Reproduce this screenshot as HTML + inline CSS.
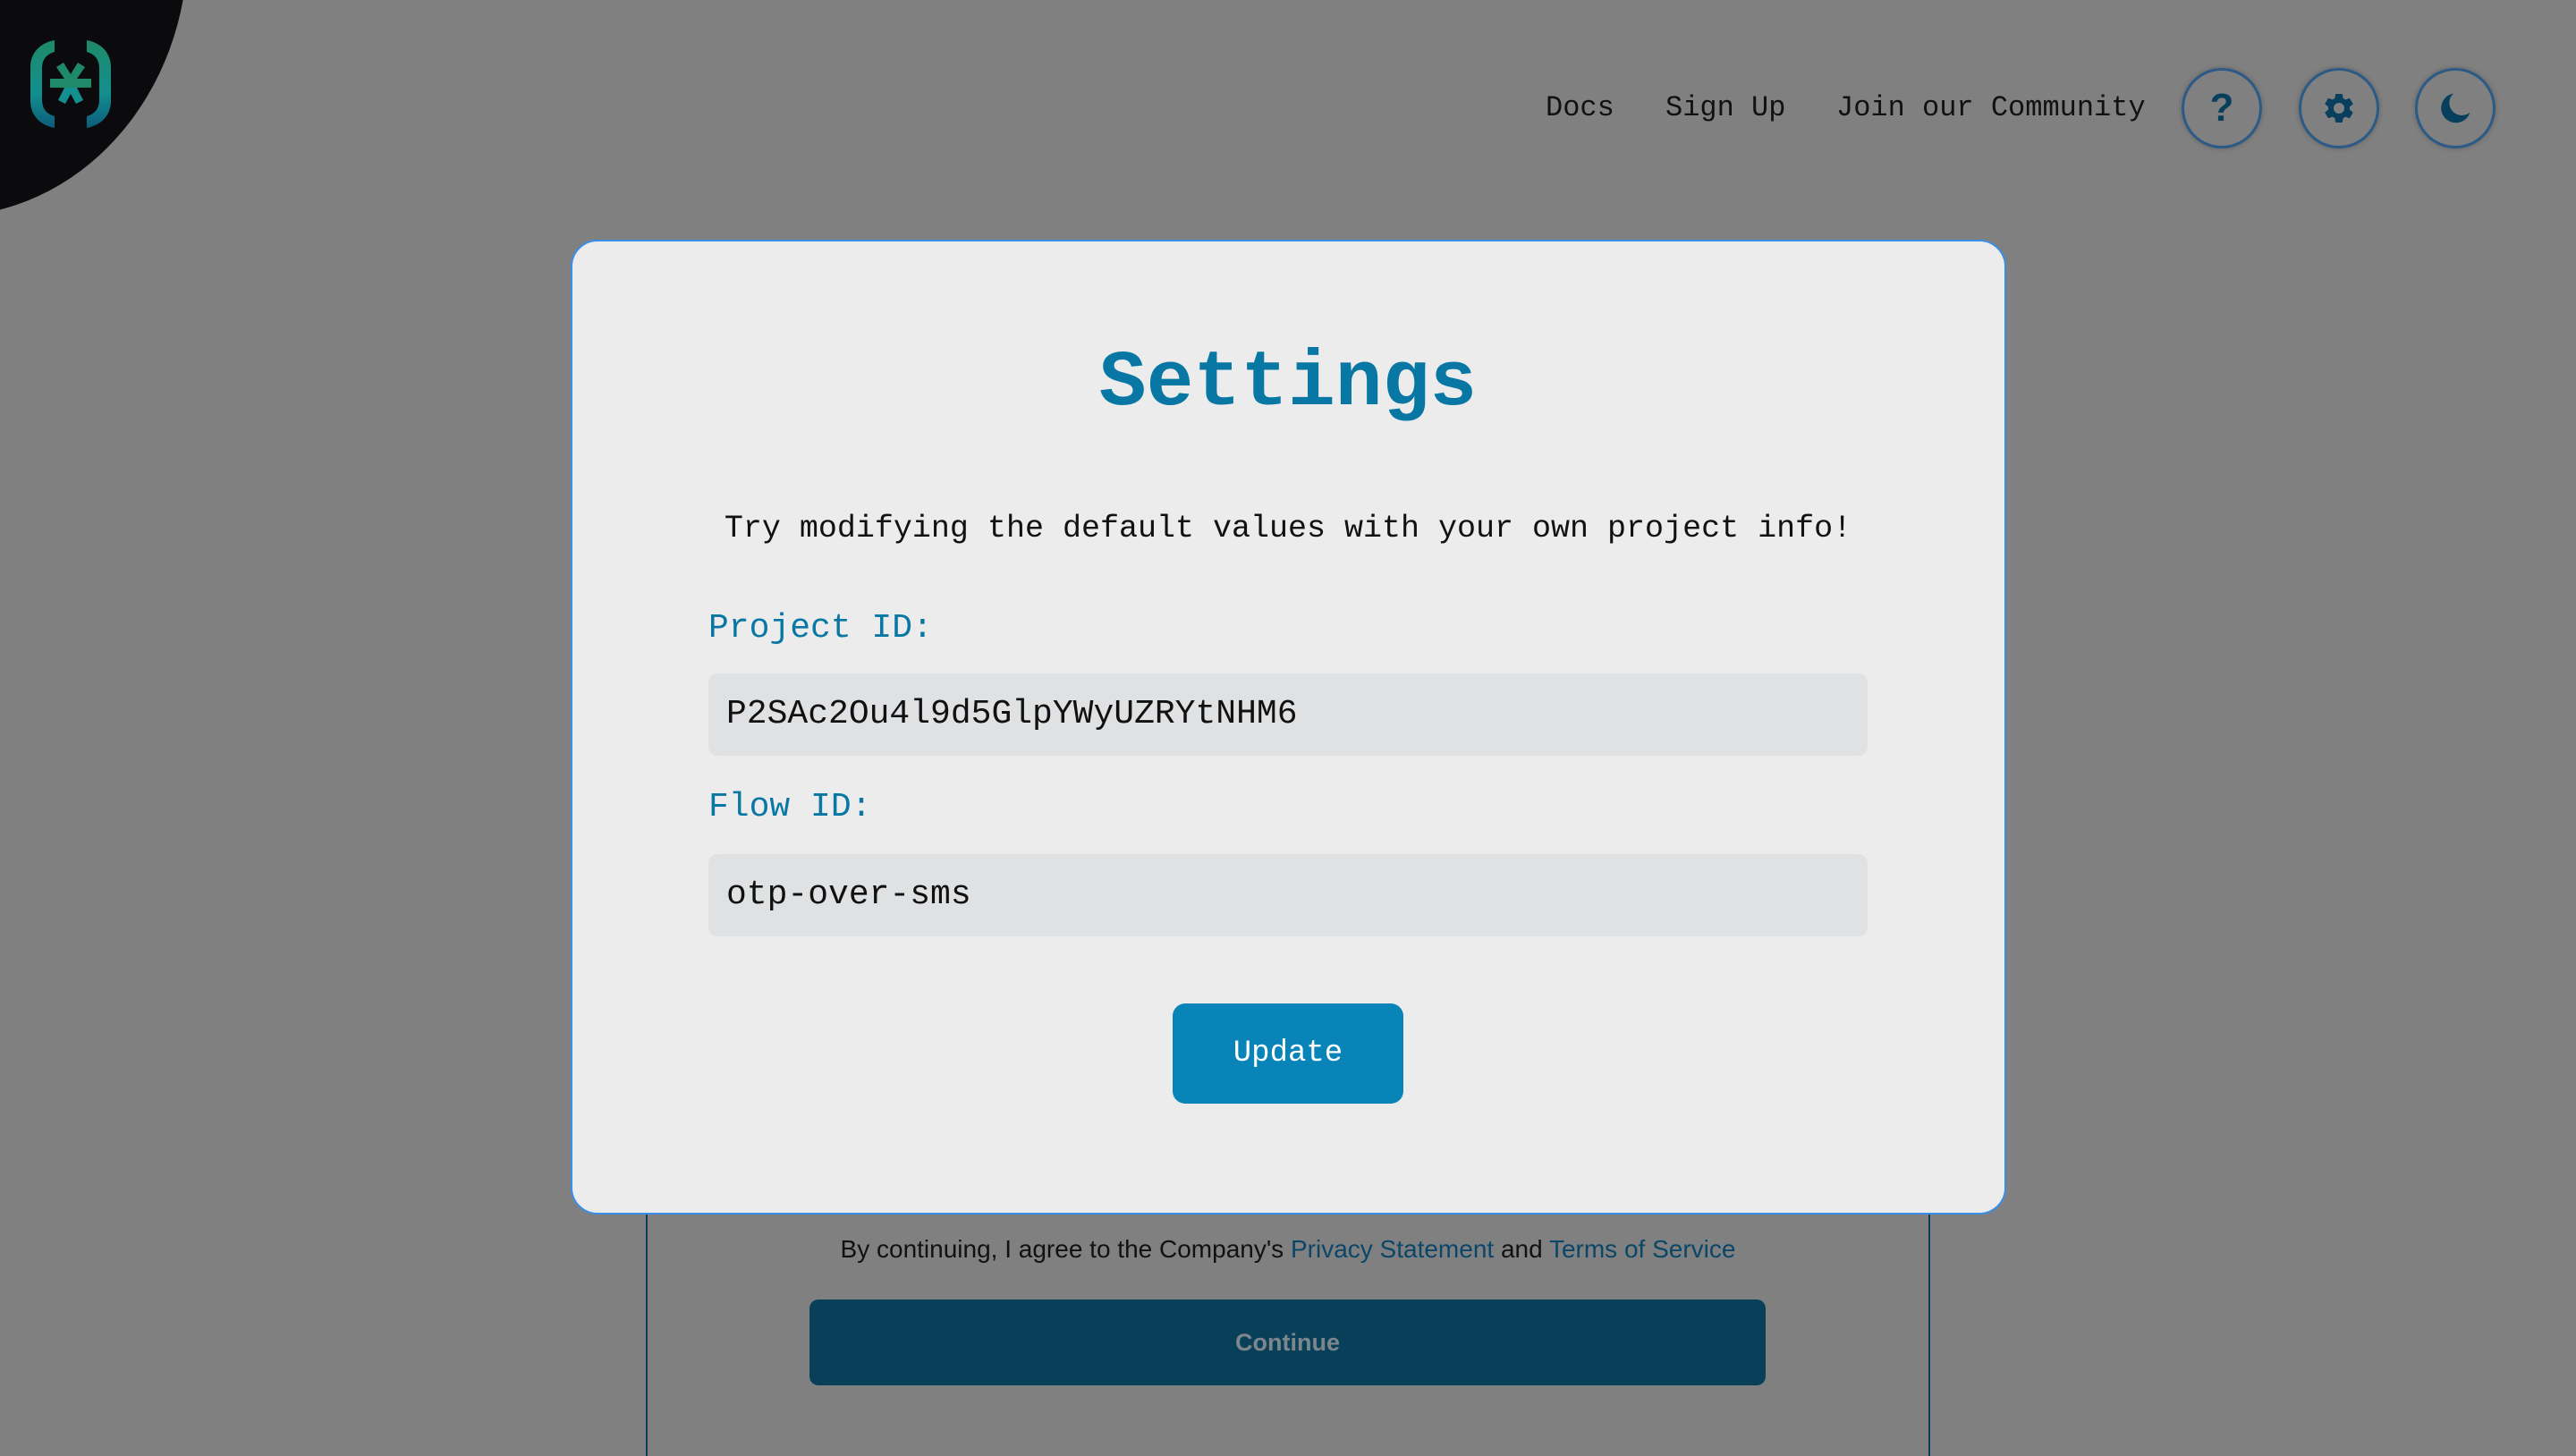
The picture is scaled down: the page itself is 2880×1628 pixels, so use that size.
<!DOCTYPE html>
<html><head><meta charset="utf-8"><style>
*{margin:0;padding:0;box-sizing:border-box}
html{height:1628px;overflow:hidden}
body{width:2880px;height:1628px;background:#808080;position:relative;overflow:hidden;font-family:"Liberation Mono",monospace}
.blob{position:absolute;left:-60px;top:-60px;width:270px;height:302px;background:#0b0b0d;border-bottom-right-radius:100% 100%}
.nav{position:absolute;top:102px;font-size:32px;color:#111;white-space:nowrap}
.cb{position:absolute;top:76px;width:90px;height:90px;border-radius:50%;border:3px solid #2c5a86;box-shadow:0 0 6px rgba(0,0,0,.25);display:flex;align-items:center;justify-content:center}
.card{position:absolute;left:722px;top:1300px;width:1436px;height:328px;border:2px solid #0a3f5a;border-bottom:none;border-radius:24px 24px 0 0}
.terms{position:absolute;left:0;width:2880px;top:1381px;text-align:center;font-family:"Liberation Sans",sans-serif;font-size:28px;color:#111}
.terms span{color:#0b4668}
.cont{position:absolute;left:905px;top:1453px;width:1069px;height:96px;background:#094059;border-radius:10px;color:#7d868c;font-family:"Liberation Sans",sans-serif;font-size:27px;font-weight:bold;display:flex;align-items:center;justify-content:center}
.modal{position:absolute;left:638px;top:268px;width:1605px;height:1090px;background:#ececec;border:2px solid #3b8ee8;border-radius:30px}
.title{position:absolute;left:0;width:100%;top:380px;text-align:center;font-size:88px;font-weight:bold;color:#0877a4}
.sub{position:absolute;left:0;width:100%;top:571px;text-align:center;font-size:35px;color:#111}
.lbl{position:absolute;left:792px;font-size:38px;color:#0877a4}
.inp{position:absolute;left:792px;width:1296px;height:92px;background:#e0e1e3;border-radius:10px;font-size:38px;color:#111;padding-left:20px;line-height:92px}
.upd{position:absolute;left:1311px;top:1122px;width:258px;height:112px;background:#0984b8;border-radius:14px;color:#fff;font-size:34px;display:flex;align-items:center;justify-content:center}
</style></head><body>
<div class="blob"></div>
<svg style="position:absolute;left:34px;top:45px" width="90" height="98" viewBox="0 0 90 98">
<defs><linearGradient id="g" x1="0" y1="0" x2="0" y2="1"><stop offset="0" stop-color="#1e8a68"/><stop offset=".6" stop-color="#138f8f"/><stop offset="1" stop-color="#0c5c7a"/></linearGradient></defs>
<path d="M27 0 C10 3 0 15 0 30 V68 C0 83 10 95 27 98 V85 C17 82 13 76 13 66 V32 C13 22 17 16 27 13Z" fill="url(#g)"/>
<path d="M63 0 C80 3 90 15 90 30 V68 C90 83 80 95 63 98 V85 C73 82 77 76 77 66 V32 C77 22 73 16 63 13Z" fill="url(#g)"/>
<rect x="22" y="43" width="46" height="10" fill="#1e8a68"/>
<path d="M29 30 L37 25 L45 38 L53 25 L61 30 L52 43 L38 43Z" fill="#1e8a68"/>
<path d="M38 53 L52 53 L59 67 L51 71 L45 60 L39 71 L31 67Z" fill="#148f8f"/>
</svg>
<div class="nav" style="left:1728px">Docs</div>
<div class="nav" style="left:1862px">Sign Up</div>
<div class="nav" style="left:2053px">Join our Community</div>
<div class="cb" style="left:2439px"><span style="font-family:'Liberation Sans',sans-serif;font-weight:bold;font-size:44px;color:#083f5c">?</span></div>
<div class="cb" style="left:2570px"><svg width="40" height="40" viewBox="0 0 24 24"><path fill="#083f5c" d="M19.14 12.94c.04-.3.06-.61.06-.94s-.02-.64-.07-.94l2.030-1.58a.5.5 0 0 0 .12-.61l-1.92-3.32a.5.5 0 0 0-.59-.22l-2.39.96a7 7 0 0 0-1.62-.94L14.4 2.81a.5.5 0 0 0-.48-.41h-3.840a.5.5 0 0 0-.48.41l-.36 2.54c-.59.24-1.13.57-1.62.94l-2.39-.96a.5.5 0 0 0-.59.22L2.72 8.87a.5.5 0 0 0 .12.61l2.03 1.58c-.05.3-.07.63-.07.94s.02.64.07.94l-2.03 1.58a.5.5 0 0 0-.12.61l1.92 3.32c.12.22.37.29.59.22l2.39-.96c.5.38 1.03.7 1.62.94l.36 2.54c.05.24.24.41.48.41h3.84c.24 0 .44-.17.47-.41l.36-2.54c.59-.24 1.130-.56 1.62-.94l2.39.96c.22.08.47 0 .59-.22l1.92-3.32a.5.5 0 0 0-.12-.61zM12 15.6A3.6 3.6 0 1 1 12 8.4a3.6 3.6 0 0 1 0 7.2z"/></svg></div>
<div class="cb" style="left:2700px"><svg width="44" height="44" viewBox="0 0 24 24"><path fill="#083f5c" d="M11 3a9 9 0 1 0 10 11.5A7 7 0 0 1 11 3z"/></svg></div>
<div class="card"></div>
<div class="terms">By continuing, I agree to the Company's <span>Privacy Statement</span> and <span>Terms of Service</span></div>
<div class="cont">Continue</div>
<div class="modal"></div>
<div class="title">Settings</div>
<div class="sub">Try modifying the default values with your own project info!</div>
<div class="lbl" style="top:681px">Project ID:</div>
<div class="inp" style="top:753px">P2SAc2Ou4l9d5GlpYWyUZRYtNHM6</div>
<div class="lbl" style="top:881px">Flow ID:</div>
<div class="inp" style="top:955px">otp-over-sms</div>
<div class="upd">Update</div>
</body></html>
